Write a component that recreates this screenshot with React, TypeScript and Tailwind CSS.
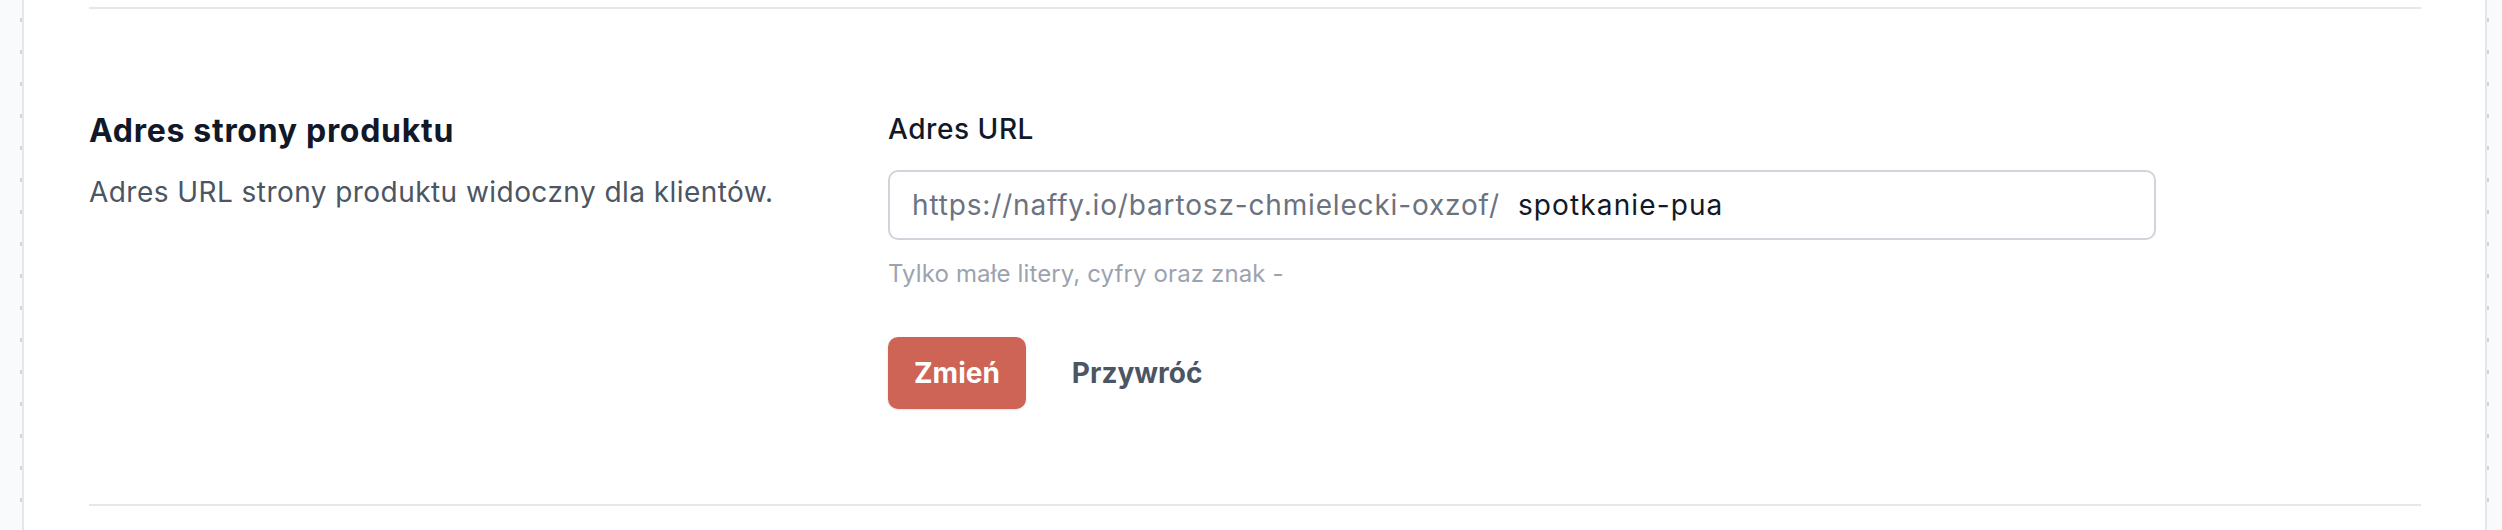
const dots =
  "w-[2px] h-full bg-[linear-gradient(to_bottom,transparent_18px,#d4d6db_18px,#d4d6db_22px,transparent_22px)] bg-[length:2px_32px] bg-repeat-y";

function UrlField() {
  return (
    <div className="w-[1268px]">
      <label className="block text-[28px] leading-[36px] font-medium tracking-[0.02em] text-[#111827]">Adres URL</label>
      <div className="mt-[23px] flex h-[70px] items-center rounded-[10px] border-2 border-[#d1d5db] bg-white pl-[22px] text-[28px] tracking-[0.03em]">
        <span className="text-[#6b7280]">https://naffy.io/bartosz-chmielecki-oxzof/</span>
        <span className="ml-[18px] tracking-[0.04em] text-[#111827]">spotkanie-pua</span>
      </div>
      <p className="mt-[18px] text-[24px] leading-[32px] tracking-[0.005em] text-[#9ca3af]">Tylko małe litery, cyfry oraz znak -</p>
    </div>
  );
}

export default function App() {
  return (
    <div className="flex h-[530px] w-full overflow-hidden bg-[#f9fafb] font-[Inter,sans-serif]">
      <div className="flex w-[24px] shrink-0 justify-end border-r-2 border-[#e5e7eb]">
        <div className={dots} />
      </div>

      <main className="flex-1 bg-white pl-[65px] pr-[64px] pt-[7px]">
        <section className="flex border-y-2 border-[#e5e7eb] pt-[102px] pb-[95px]">
          <div className="w-[799px] shrink-0">
            <h3 className="text-[32px] leading-[40px] font-bold tracking-[0.022em] text-[#111827]">Adres strony produktu</h3>
            <p className="mt-[21px] text-[28px] leading-[40px] tracking-[0.016em] text-[#4b5563]">
              Adres URL strony produktu widoczny dla klientów.
            </p>
          </div>

          <div>
            <UrlField />
            <div className="mt-[47px] flex items-center gap-[46px]">
              <button className="h-[72px] rounded-[10px] bg-[#cd6456] px-[26px] text-[28px] font-bold text-white shadow-sm">
                Zmień
              </button>
              <button className="text-[28px] font-bold text-[#4b5563]">Przywróć</button>
            </div>
          </div>
        </section>
      </main>

      <div className="flex w-[17px] shrink-0 border-l-2 border-[#e5e7eb]">
        <div className={dots} />
      </div>
    </div>
  );
}
